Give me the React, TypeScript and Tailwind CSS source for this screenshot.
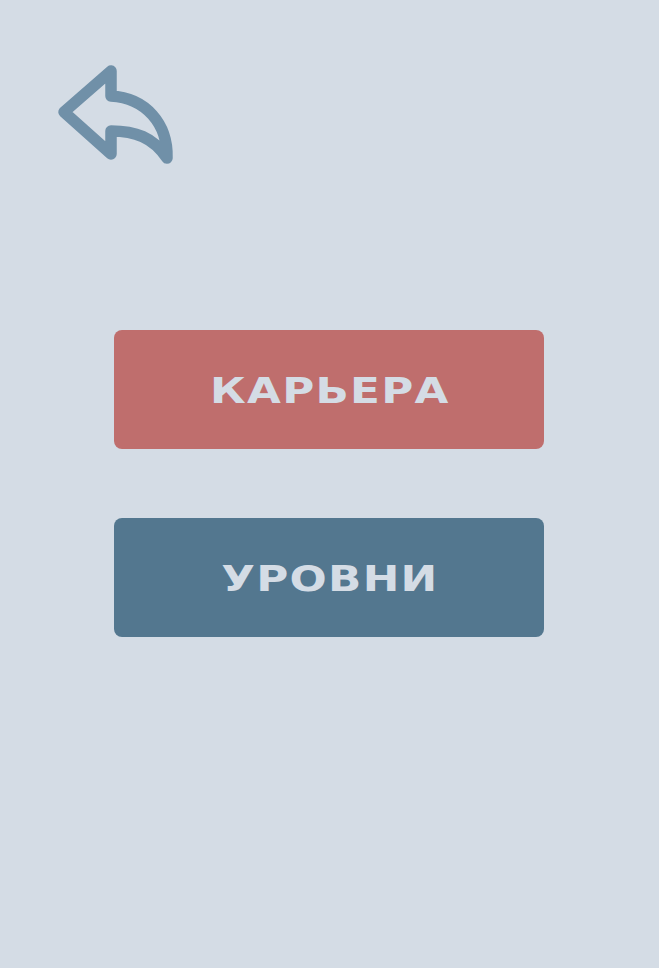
import React from "react";

export default function App() {
  return (
    <div className="w-[659px] h-[968px] bg-[#d4dce5] flex flex-col" style={{ fontFamily: '"DejaVu Sans", "Liberation Sans", sans-serif' }}>
      <div className="h-[330px] relative">
        <svg className="absolute left-0 top-0" width="200" height="200" viewBox="0 0 200 200" fill="none">
          <path
            d="M64 112 L111 71 V96 C146 98 168 124 167 158 C153 137 135 131 111 131 V154 Z"
            stroke="#7090a8"
            strokeWidth="11.5"
            strokeLinejoin="round"
            strokeLinecap="round"
          />
        </svg>
      </div>
      <div className="flex flex-col gap-[69px] pl-[114px]">
        <button className="w-[430px] h-[119px] rounded-[8px] bg-[#bf6e6d] flex items-center justify-center">
          <span className="inline-block mt-[4px] scale-x-125 text-[35px] font-bold tracking-[1px] mr-[-1px] text-[#d4dce5] leading-none">КАРЬЕРА</span>
        </button>
        <button className="w-[430px] h-[119px] rounded-[8px] bg-[#53778f] flex items-center justify-center">
          <span className="inline-block mt-[4px] scale-x-125 text-[35px] font-bold tracking-[1px] mr-[-1px] text-[#d4dce5] leading-none">УРОВНИ</span>
        </button>
      </div>
    </div>
  );
}
